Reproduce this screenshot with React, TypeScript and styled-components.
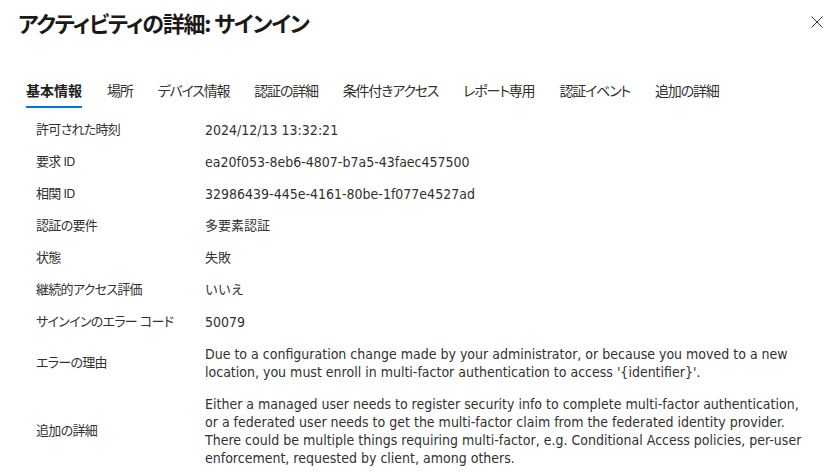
import React from 'react';
import styled, { createGlobalStyle } from 'styled-components';

const GlobalStyle = createGlobalStyle`
  html, body {
    margin: 0;
    padding: 0;
    background: #ffffff;
  }
  body {
    font-family: "Noto Sans CJK JP", sans-serif;
    color: #323130;
  }
`;

interface Detail {
  label: string;
  value: string;
}

const tabs = [
  '基本情報',
  '場所',
  'デバイス情報',
  '認証の詳細',
  '条件付きアクセス',
  'レポート専用',
  '認証イベント',
  '追加の詳細',
];

const details: Detail[] = [
  { label: '許可された時刻', value: '2024/12/13 13:32:21' },
  { label: '要求 ID', value: 'ea20f053-8eb6-4807-b7a5-43faec457500' },
  { label: '相関 ID', value: '32986439-445e-4161-80be-1f077e4527ad' },
  { label: '認証の要件', value: '多要素認証' },
  { label: '状態', value: '失敗' },
  { label: '継続的アクセス評価', value: 'いいえ' },
  { label: 'サインインのエラー コード', value: '50079' },
  {
    label: 'エラーの理由',
    value:
      "Due to a configuration change made by your administrator, or because you moved to a new location, you must enroll in multi-factor authentication to access '{identifier}'.",
  },
  {
    label: '追加の詳細',
    value:
      'Either a managed user needs to register security info to complete multi-factor authentication, or a federated user needs to get the multi-factor claim from the federated identity provider. There could be multiple things requiring multi-factor, e.g. Conditional Access policies, per-user enforcement, requested by client, among others.',
  },
];

const isJapanese = (s: string) => /[\u3040-\u30ff\u4e00-\u9fff]/.test(s);

function App() {
  return (
    <Panel>
      <GlobalStyle />
      <Header>
        <Title>アクティビティの詳細: サインイン</Title>
        <CloseButton aria-label="閉じる">
          <svg width="12" height="12" viewBox="0 0 12 12">
            <path d="M0.5 0.5 L11.5 11.5 M11.5 0.5 L0.5 11.5" stroke="#323130" strokeWidth="1" fill="none" />
          </svg>
        </CloseButton>
      </Header>

      <TabBar>
        {tabs.map((tab, i) => (
          <Tab key={tab} active={i === 0}>
            {tab}
          </Tab>
        ))}
      </TabBar>

      <DetailList>
        {details.map((d) => (
          <Row key={d.label}>
            <Label>{d.label}</Label>
            <Value jp={isJapanese(d.value)}>{d.value}</Value>
          </Row>
        ))}
      </DetailList>
    </Panel>
  );
}

const Panel = styled.div`
  width: 837px;
  height: 475px;
  overflow: hidden;
  background: #ffffff;
`;

const Header = styled.div`
  display: flex;
  justify-content: space-between;
  align-items: center;
  padding: 6px 18px 0 18px;
`;

const Title = styled.h1`
  margin: 0;
  font-family: "Noto Sans CJK JP", sans-serif;
  font-feature-settings: "palt";
  font-size: 22px;
  line-height: 32px;
  font-weight: 700;
  color: #1b1a19;
  letter-spacing: -1.2px;
`;

const CloseButton = styled.button`
  display: flex;
  align-items: center;
  justify-content: center;
  width: 24px;
  height: 24px;
  padding: 0;
  margin-right: -10px;
  border: none;
  background: transparent;
  cursor: pointer;
`;

const TabBar = styled.div`
  display: flex;
  gap: 25px;
  margin-top: 42px;
  padding-left: 26px;
`;

const Tab = styled.div<{ active: boolean }>`
  font-family: "Noto Sans CJK JP", sans-serif;
  font-feature-settings: "palt";
  font-size: 14px;
  line-height: 20px;
  padding-bottom: 6px;
  font-weight: ${(p) => (p.active ? 700 : 400)};
  letter-spacing: ${(p) => (p.active ? '0' : '-1.2px')};
  color: ${(p) => (p.active ? '#201f1e' : '#323130')};
  border-bottom: 2px solid ${(p) => (p.active ? '#0078d4' : 'transparent')};
  white-space: nowrap;
`;

const DetailList = styled.div`
  margin-top: 6px;
  padding-left: 36px;
`;

const Row = styled.div`
  display: grid;
  grid-template-columns: 169px 610px;
  align-items: center;
  padding: 7px 0;
  line-height: 18px;
`;

const Label = styled.div`
  font-family: "DejaVu Sans Condensed", "Noto Sans CJK JP", sans-serif;
  font-feature-settings: "palt";
  font-size: 13px;
  color: #323130;
  white-space: nowrap;
  letter-spacing: -0.7px;
`;

const Value = styled.div<{ jp: boolean }>`
  font-family: "DejaVu Sans Condensed", "Noto Sans CJK JP", sans-serif;
  font-size: ${(p) => (p.jp ? '13px' : '14px')};
  color: #323130;
`;

export default App;
